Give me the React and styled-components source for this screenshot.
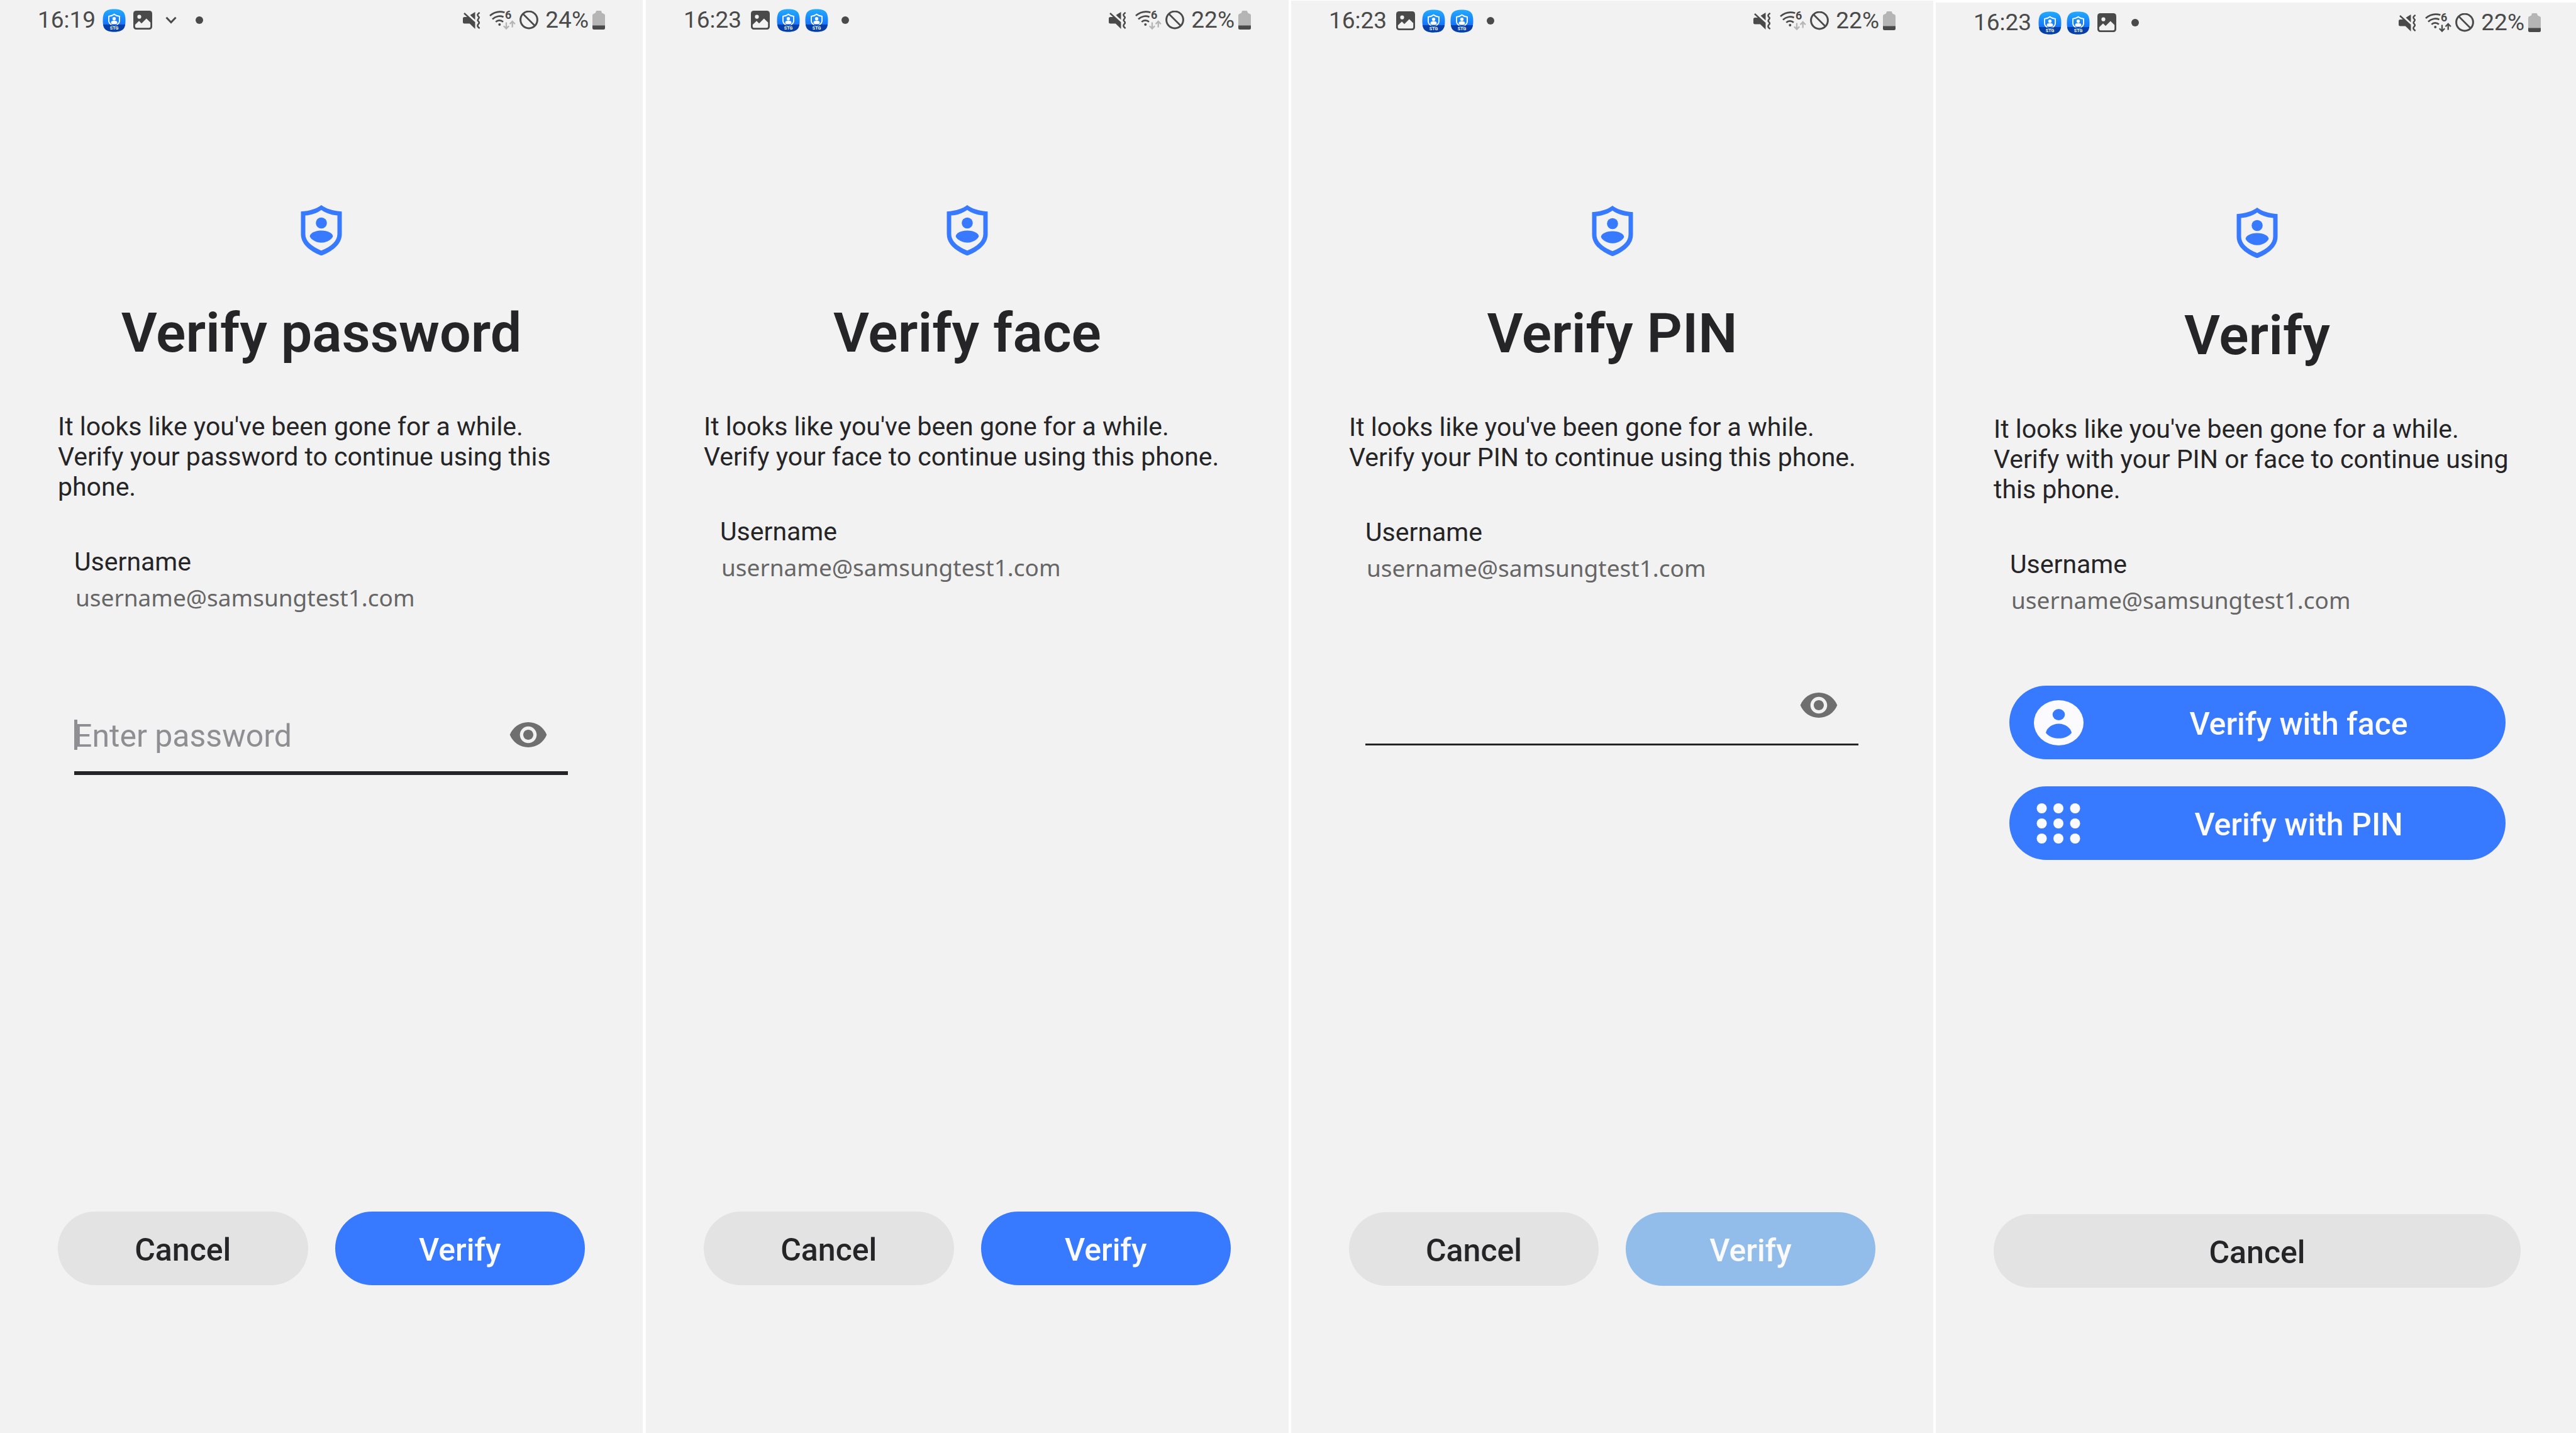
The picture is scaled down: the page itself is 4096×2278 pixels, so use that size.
import React, { useId } from "react";
import styled, { createGlobalStyle, css } from "styled-components";

const color = {
  surface: "#f2f2f2",
  divider: "#ffffff",
  text: "#252527",
  status: "#4a4a4a",
  statusMuted: "#b5b5b5",
  secondary: "#666666",
  hint: "#8f8f93",
  primary: "#387aff",
  primaryDisabled: "#92bdea",
  neutral: "#e3e3e3",
  onPrimary: "#fafaff",
};

const GlobalStyle = createGlobalStyle`
  *, *::before, *::after { box-sizing: border-box; }
  body {
    margin: 0;
    background: ${color.divider};
    color: ${color.text};
    font-family: Roboto, "Liberation Sans", sans-serif;
  }
`;

/* ---------- layout ---------- */

const Gallery = styled.main`
  display: grid;
  grid-template-columns: 1027fr 1026fr 1025fr 1018fr;
  min-height: 100vh;
  overflow: hidden;
`;

const Panel = styled.section`
  display: flex;
  overflow: hidden;
  background: ${color.surface};
  border-style: solid;
  border-color: ${color.divider};
  border-width: ${(p) => p.$top}px ${(p) => p.$divider}px 0 0;
`;

const Screen = styled.div`
  flex: 1;
  display: flex;
  flex-direction: column;
  min-width: 0;
  margin-right: -${(p) => p.$bleed}px;
  padding-bottom: ${(p) => 235 - p.$top}px;
`;

const StatusBar = styled.header`
  display: flex;
  align-items: center;
  justify-content: space-between;
  height: 64px;
  padding: 0 60px;
  color: ${color.status};
  font-size: 37px;
  line-height: 44px;
`;

const StatusGroup = styled.div`
  display: flex;
  align-items: center;
`;

const Notifications = styled.div`
  display: flex;
  gap: 8px;
  margin-left: 11px;
`;

const Slot = styled.span`
  display: flex;
  align-items: center;
  justify-content: center;
  width: 37px;
  height: 37px;
`;

const Dot = styled.span`
  width: 12px;
  height: 12px;
  border-radius: 50%;
  background: currentColor;
`;

const BatteryLevel = styled.span`
  margin-right: 6px;
`;

const Glyph = styled.svg`
  display: block;
  flex: none;
  width: ${(p) => p.$w}px;
  height: ${(p) => p.$h}px;
  margin-right: ${(p) => p.$gap || 0}px;
`;

const Content = styled.div`
  display: flex;
  flex-direction: column;
  padding: 262px 92px 0;
`;

const Emblem = styled(Glyph)`
  align-self: center;
  color: ${color.primary};
`;

const Title = styled.h1`
  margin: 71px 0 73px;
  font-size: 88px;
  font-weight: 600;
  line-height: 104px;
  text-align: center;
`;

const Message = styled.p`
  margin: 0 0 71px;
  font-size: 41px;
  line-height: 48px;
`;

const Account = styled.dl`
  margin: 0 26px;
  font-size: 41px;
  line-height: 48px;
`;

const AccountLabel = styled.dt``;

const AccountValue = styled.dd`
  margin: 7px 0 0 2px;
  color: ${color.secondary};
  font-family: "Noto Sans", "Open Sans", sans-serif;
  font-size: 37px;
  line-height: 52px;
`;

const Field = styled.div`
  display: flex;
  align-items: center;
  height: 122px;
  margin: 134px 27px 0 26px;
  border-bottom: ${(p) => (p.$active ? 6 : 3)}px solid ${color.text};
  padding-bottom: ${(p) => (p.$active ? 0 : 3)}px;
`;

const Caret = styled.span`
  width: 5px;
  height: 48px;
  margin-right: -5px;
  background: ${color.hint};
`;

const FieldInput = styled.input`
  flex: 1;
  min-width: 0;
  padding: 4px 0 0;
  border: 0;
  outline: 0;
  background: transparent;
  color: ${color.text};
  font-family: inherit;
  font-size: 50px;
  line-height: 60px;

  &::placeholder {
    color: ${color.hint};
    opacity: 1;
  }
`;

const IconButton = styled.button`
  display: flex;
  margin-right: 31px;
  padding: 0;
  border: 0;
  background: none;
  color: #6f6f6f;
`;

/* ---------- buttons ---------- */

const tones = {
  neutral: css`
    background: ${color.neutral};
    color: ${color.text};
  `,
  primary: css`
    background: ${color.primary};
    color: ${color.onPrimary};
  `,
};

const Button = styled.button`
  flex: 1;
  display: flex;
  align-items: center;
  justify-content: center;
  min-height: 117px;
  padding: 0;
  border: 0;
  border-radius: 59px;
  font-family: inherit;
  font-size: 50px;
  font-weight: 500;
  line-height: 60px;
  ${(p) => tones[p.$tone]}

  &:disabled {
    background: ${color.primaryDisabled};
  }
`;

const ButtonLabel = styled.span`
  padding-top: 4px;
`;

const MethodButton = styled(Button)`
  padding-left: 39px;
`;

const MethodIcon = styled(Glyph)`
  margin-right: 13px;
`;

const MethodLabel = styled(ButtonLabel)`
  flex: 1;
  text-align: center;
`;

const Methods = styled.div`
  display: flex;
  flex-direction: column;
  gap: 43px;
  margin: 110px 24px 0 25px;
`;

const Actions = styled.footer`
  display: flex;
  gap: 43px;
  margin-top: auto;
  padding: 0 92px;
`;

/* ---------- icons ---------- */

const ShieldIcon = () => (
  <Emblem $w={66} $h={80} viewBox="0 0 66 80" fill="currentColor" aria-hidden="true">
    <path
      fillRule="evenodd"
      d="M33 0C40 5.400 51 9.400 65.500 10.300V46C65.500 61 53 72.500 33 80.400C13 72.500 .5 61 .5 46V10.300C15 9.400 26 5.400 33 0ZM33 7.800C26.500 12.500 18.500 15.600 7.500 16.600V46C7.500 57 17 65.600 33 72.300C49 65.600 58.500 57 58.500 46V16.600C47.500 15.600 39.500 12.500 33 7.800Z"
    />
    <circle cx="33" cy="28.500" r="8.800" />
    <path d="M33 40.500C44 40.500 51.300 45.300 51.300 49.500C51.300 52.500 43.500 59.800 33 59.800S14.700 52.500 14.700 49.500C14.700 45.300 22 40.500 33 40.500Z" />
  </Emblem>
);

const AppIcon = () => {
  const id = useId();
  return (
    <Glyph $w={37} $h={37} viewBox="0 0 37 37" aria-hidden="true">
      <defs>
        <linearGradient id={id + "g"} x1="0" y1="0" x2="0" y2="1">
          <stop offset="0" stopColor="#22acff" />
          <stop offset="0.68" stopColor="#1673fb" />
        </linearGradient>
        <clipPath id={id + "c"}>
          <path d="M18.500 .5C32 .5 36.500 5 36.500 18.500S32 36.500 18.500 36.500S.5 32 .5 18.500S5 .5 18.500 .5Z" />
        </clipPath>
      </defs>
      <g clipPath={`url(#${id}c)`}>
        <rect width="37" height="37" fill={`url(#${id}g)`} />
        <rect y="25" width="37" height="12" fill="#063fa9" />
      </g>
      <path d="M14 25.500L18.500 28L23 25.500" fill="none" stroke="#3c7fd6" strokeWidth="1.500" />
      <path
        d="M14 25.300C11.300 23.600 10 21.500 10 19V11.800C13.500 11.500 16.500 10.500 18.500 8.800C20.500 10.500 23.500 11.500 27 11.800V19C27 21.500 25.700 23.600 23 25.300"
        fill="none"
        stroke="#fff"
        strokeWidth="1.800"
      />
      <circle cx="18.500" cy="15.700" r="2.700" fill="#fff" />
      <ellipse cx="18.500" cy="21.700" rx="5" ry="2.900" fill="#fff" />
      <text x="18.500" y="33.300" textAnchor="middle" fontFamily="Roboto, sans-serif" fontSize="7" fontWeight="700" fill="#fff">
        STG
      </text>
    </Glyph>
  );
};

const PictureIcon = () => (
  <Glyph $w={30} $h={30} viewBox="0 0 30 30" aria-hidden="true">
    <rect width="30" height="30" rx="4.500" fill="currentColor" />
    <circle cx="9.500" cy="9.700" r="3.100" fill={color.surface} />
    <path
      d="M2.800 22.200L9 16.300L13 20.200L20.800 12.500L27.200 18.800V25Q27.200 27.200 25 27.200H5Q2.800 27.200 2.800 25Z"
      fill={color.surface}
    />
  </Glyph>
);

const ChevronIcon = () => (
  <Glyph $w={18} $h={12} viewBox="0 0 18 12" aria-hidden="true">
    <path d="M1.500 1.800L9 9.500L16.500 1.800" fill="none" stroke="currentColor" strokeWidth="3" />
  </Glyph>
);

const MuteIcon = () => (
  <Glyph $w={28} $h={27} $gap={14} viewBox="0 0 28 27" fill="currentColor" aria-hidden="true">
    <path d="M0 10.500Q0 8 2.500 8H8.800L19.500 17.600V27L10.800 18.500H2.500Q0 18.500 0 16Z" />
    <path d="M11.500 5L19.500 0V12.500Z" />
    <path d="M2 2L19 17.400" stroke="currentColor" strokeWidth="2.400" fill="none" />
    <path
      d="M26.700 1C22 4 23 5.500 25.500 8.200C27 9.800 23 11.500 23.600 13.500C24 15 27 16 25.500 18.200C23 21 22 23 26.700 26"
      fill="none"
      stroke="currentColor"
      strokeWidth="2.500"
    />
  </Glyph>
);

const WifiIcon = ({ active }) => (
  <Glyph $w={42} $h={38} $gap={6} viewBox="0 -4 42 38" fill="none" stroke="currentColor" strokeWidth="2.600" aria-hidden="true">
    <path d="M1 8C7.500 2.200 15.500 .2 24.400 2.700" />
    <path d="M5 13.500C10 8.500 17 7.500 22.600 10" />
    <path d="M10.300 17.800C13.500 14.500 18.500 14.500 22 17.800" />
    <circle cx="16.300" cy="22" r="2" fill="currentColor" stroke="none" />
    <text x="25" y="13.300" fontFamily="Roboto, sans-serif" fontSize="18" fontWeight="700" fill="currentColor" stroke="none">
      6
    </text>
    <path
      d="M27 18.500V28M22.800 24.300L27 28.500L31.200 24.300M36.700 26.500V17.500M32.500 21.200L36.700 17L40.900 21.200"
      stroke={active ? color.status : color.statusMuted}
      strokeWidth="2.300"
    />
  </Glyph>
);

const BlockedIcon = () => (
  <Glyph $w={30} $h={30} $gap={11} viewBox="0 0 30 30" fill="none" stroke="currentColor" aria-hidden="true">
    <circle cx="15" cy="14.500" r="13.400" strokeWidth="3" />
    <path d="M5.500 5L24.500 24" strokeWidth="2.600" />
  </Glyph>
);

const BatteryIcon = () => (
  <Glyph $w={20} $h={30} viewBox="0 0 20 30" aria-hidden="true">
    <path
      d="M0 7Q0 5 3 4.400Q5.500 4 5.500 2Q5.500 0 7 0H13Q14.500 0 14.500 2Q14.500 4 17 4.400Q20 5 20 7V24H0Z"
      fill={color.statusMuted}
    />
    <path d="M0 23.500H20V27.500Q20 30 17.500 30H2.500Q0 30 0 27.500Z" fill="currentColor" />
  </Glyph>
);

const EyeIcon = () => (
  <Glyph $w={64} $h={64} viewBox="0 0 24 24" fill="currentColor" aria-hidden="true">
    <path d="M12 4.500C7 4.500 2.730 7.610 1 12c1.730 4.390 6 7.500 11 7.500s9.270-3.110 11-7.500c-1.730-4.390-6-7.500-11-7.500zM12 17c-2.760 0-5-2.240-5-5s2.240-5 5-5 5 2.240 5 5-2.240 5-5 5zm0-8c-1.660 0-3 1.340-3 3s1.340 3 3 3 3-1.340 3-3-1.340-3-3-3z" />
  </Glyph>
);

const FaceIcon = () => (
  <MethodIcon $w={79} $h={72} viewBox="0 0 79 72" aria-hidden="true">
    <ellipse cx="39.500" cy="36" rx="39.500" ry="36" fill={color.onPrimary} />
    <ellipse cx="39.500" cy="23" rx="9.800" ry="8.900" fill={color.primary} />
    <path
      d="M39.500 37.500C50 37.500 58.500 44 60 52C55.500 57.500 48.500 60.800 39.500 60.800S23.500 57.500 19 52C20.500 44 29 37.500 39.500 37.500Z"
      fill={color.primary}
    />
  </MethodIcon>
);

const KeypadIcon = () => (
  <MethodIcon $w={79} $h={72} viewBox="0 0 79 72" fill={color.onPrimary} aria-hidden="true">
    {[12, 36, 60].map((y) => [12.5, 39, 65.5].map((x) => <circle key={`${x}-${y}`} cx={x} cy={y} r="8" />))}
  </MethodIcon>
);

const notificationIcons = { app: AppIcon, picture: PictureIcon, chevron: ChevronIcon, dot: Dot };

/* ---------- screens ---------- */

const screens = [
  {
    id: "password",
    top: 0,
    divider: 5,
    time: "16:19",
    battery: "24%",
    icons: ["app", "picture", "chevron", "dot"],
    title: "Verify password",
    message: "Verify your password to continue using this phone.",
    field: { active: true, label: "Enter password", placeholder: "Enter password" },
    verify: "enabled",
  },
  {
    id: "face",
    top: 0,
    divider: 4,
    time: "16:23",
    battery: "22%",
    icons: ["picture", "app", "app", "dot"],
    title: "Verify face",
    message: "Verify your face to continue using this phone.",
    verify: "enabled",
  },
  {
    id: "pin",
    top: 1,
    divider: 4,
    time: "16:23",
    battery: "22%",
    icons: ["picture", "app", "app", "dot"],
    title: "Verify PIN",
    message: "Verify your PIN to continue using this phone.",
    field: { active: false, label: "PIN", placeholder: "" },
    verify: "disabled",
  },
  {
    id: "choice",
    top: 4,
    divider: 0,
    bleed: 4,
    time: "16:23",
    battery: "22%",
    wifiActive: true,
    icons: ["app", "app", "picture", "dot"],
    title: "Verify",
    message: "Verify with your PIN or face to continue using this phone.",
    methods: true,
  },
];

function VerifyScreen({ screen }) {
  const { id, top, divider, bleed = 0, field, methods, verify } = screen;
  return (
    <Panel $top={top} $divider={divider} aria-labelledby={`${id}-title`}>
      <Screen $top={top} $bleed={bleed}>
        <StatusBar>
          <StatusGroup>
            <time>{screen.time}</time>
            <Notifications>
              {screen.icons.map((name, i) => {
                const Icon = notificationIcons[name];
                return (
                  <Slot key={i}>
                    <Icon />
                  </Slot>
                );
              })}
            </Notifications>
          </StatusGroup>
          <StatusGroup>
            <MuteIcon />
            <WifiIcon active={screen.wifiActive} />
            <BlockedIcon />
            <BatteryLevel>{screen.battery}</BatteryLevel>
            <BatteryIcon />
          </StatusGroup>
        </StatusBar>

        <Content>
          <ShieldIcon />
          <Title id={`${id}-title`}>{screen.title}</Title>
          <Message>
            It looks like you've been gone for a while.
            <br />
            {screen.message}
          </Message>
          <Account>
            <AccountLabel>Username</AccountLabel>
            <AccountValue>username@samsungtest1.com</AccountValue>
          </Account>
          {field && (
            <Field $active={field.active}>
              {field.active && <Caret />}
              <FieldInput type="password" aria-label={field.label} placeholder={field.placeholder} />
              <IconButton type="button" aria-label="Show">
                <EyeIcon />
              </IconButton>
            </Field>
          )}
          {methods && (
            <Methods>
              <MethodButton type="button" $tone="primary">
                <FaceIcon />
                <MethodLabel>Verify with face</MethodLabel>
              </MethodButton>
              <MethodButton type="button" $tone="primary">
                <KeypadIcon />
                <MethodLabel>Verify with PIN</MethodLabel>
              </MethodButton>
            </Methods>
          )}
        </Content>

        <Actions>
          <Button type="button" $tone="neutral">
            <ButtonLabel>Cancel</ButtonLabel>
          </Button>
          {verify && (
            <Button type="button" $tone="primary" disabled={verify === "disabled"}>
              <ButtonLabel>Verify</ButtonLabel>
            </Button>
          )}
        </Actions>
      </Screen>
    </Panel>
  );
}

export default function App() {
  return (
    <>
      <GlobalStyle />
      <Gallery>
        {screens.map((screen) => (
          <VerifyScreen key={screen.id} screen={screen} />
        ))}
      </Gallery>
    </>
  );
}
